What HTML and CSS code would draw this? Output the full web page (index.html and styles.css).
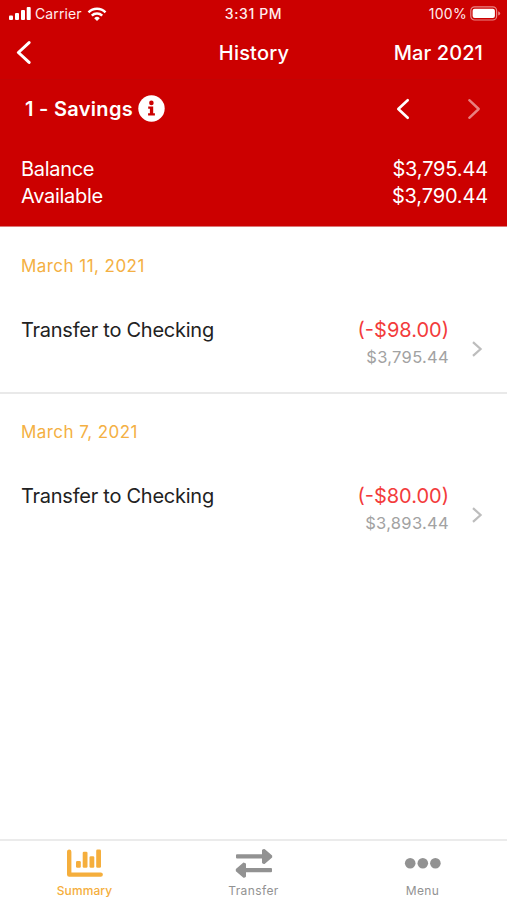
FILE: index.html
```html
<!DOCTYPE html>
<html lang="en">
<head>
<meta charset="utf-8">
<title>History</title>
<link rel="stylesheet" href="styles.css">
</head>
<body>
<div class="app">
  <header class="header">
    <div class="status">
      <div class="status-left">
        <svg class="signal" width="22" height="14" viewBox="0 0 22 14" fill="#fff"><rect x="0" y="8.5" width="4" height="4.5" rx="1"/><rect x="6" y="6" width="4" height="7" rx="1"/><rect x="12" y="3" width="4" height="10" rx="1"/><rect x="17.7" y="0" width="4" height="13" rx="1"/></svg>
        <span class="carrier">Carrier</span>
        <svg class="wifi" width="20" height="14" viewBox="0 0 20 14" fill="none" stroke="#fff" stroke-width="2.5"><path d="M1.5 5.4a12 12 0 0 1 17 0"/><path d="M4.8 8.7a7.4 7.4 0 0 1 10.4 0"/><path d="M10 14 7.2 11.2a4 4 0 0 1 5.6 0z" fill="#fff" stroke="none"/></svg>
      </div>
      <span class="clock">3:31 PM</span>
      <div class="status-right">
        <span class="percent">100%</span>
        <svg width="31" height="15" viewBox="0 0 31 15"><rect x=".8" y=".8" width="25.8" height="13.2" rx="3.8" fill="none" stroke="#e98585" stroke-width="1.2"/><rect x="2.6" y="2.7" width="22.3" height="9.4" rx="2" fill="#fff"/><path d="M28.2 5.2q2 .8 2 2.2t-2 2.2z" fill="#e98585"/></svg>
      </div>
    </div>
    <nav class="navbar">
      <svg class="back" width="16" height="24" viewBox="0 0 16 24" fill="none" stroke="#fff" stroke-width="3" stroke-linecap="round" stroke-linejoin="round"><path d="M14.1 1.6 3.4 11.5l10.7 9.9"/></svg>
      <h1 class="title">History</h1>
      <span class="month">Mar 2021</span>
    </nav>
    <div class="account">
      <span class="account-name">1 - Savings</span>
      <svg class="info" width="27" height="27" viewBox="0 0 27 27"><circle cx="13.5" cy="13.5" r="13.2" fill="#fff"/><circle cx="13.4" cy="7.9" r="2.3" fill="#c00"/><path d="M10.2 11.5h5v6.7h1.7v2.3h-6.8v-2.3h1.8v-4.4h-1.7z" fill="#c00"/></svg>
      <svg class="prev" width="14" height="22" viewBox="0 0 14 22" fill="none" stroke="#fff" stroke-width="2.6" stroke-linecap="round" stroke-linejoin="round"><path d="M11.7 2.2 2.3 11l9.4 8.8"/></svg>
      <svg class="next" width="14" height="22" viewBox="0 0 14 22" fill="none" stroke="#e98080" stroke-width="2.4" stroke-linecap="round" stroke-linejoin="round"><path d="m2.3 2.2 9.4 8.8-9.4 8.8"/></svg>
    </div>
    <div class="totals">
      <div class="total"><span class="label">Balance</span><span class="value">$3,795.44</span></div>
      <div class="total"><span class="label">Available</span><span class="value">$3,790.44</span></div>
    </div>
  </header>
  <main class="list">
    <section class="entry">
      <h2 class="date">March 11, 2021</h2>
      <div class="row">
        <span class="desc">Transfer to Checking</span>
        <div class="amounts"><span class="amount">(-$98.00)</span><span class="running">$3,795.44</span></div>
        <svg class="chevron" width="12" height="18" viewBox="0 0 12 18" fill="none" stroke="#bdbdbd" stroke-width="2.2"><path d="m2 2.1 7.6 6.9L2 15.9"/></svg>
      </div>
    </section>
    <section class="entry">
      <h2 class="date">March 7, 2021</h2>
      <div class="row">
        <span class="desc">Transfer to Checking</span>
        <div class="amounts"><span class="amount">(-$80.00)</span><span class="running">$3,893.44</span></div>
        <svg class="chevron" width="12" height="18" viewBox="0 0 12 18" fill="none" stroke="#bdbdbd" stroke-width="2.2"><path d="m2 2.1 7.6 6.9L2 15.9"/></svg>
      </div>
    </section>
  </main>
  <footer class="tabs">
    <div class="tab active">
      <svg width="38" height="30" viewBox="0 0 38 30" fill="currentColor"><path d="M3.200 3.800v22.800h31.500" fill="none" stroke="currentColor" stroke-width="4.400" stroke-linecap="round" stroke-linejoin="round"/><rect x="10" y="13" width="4.800" height="6.800" rx="1.300"/><rect x="16.700" y="3.800" width="4.800" height="16" rx="1.300"/><rect x="23.500" y="8.300" width="4.800" height="11.500" rx="1.300"/><rect x="30.200" y="1.600" width="4.800" height="18.200" rx="1.300"/></svg>
      <span class="tab-summary">Summary</span>
    </div>
    <div class="tab">
      <svg width="38" height="30" viewBox="0 0 38 30" fill="currentColor" stroke="currentColor" stroke-width="2" stroke-linejoin="round"><path d="M2 7.2h26V2.4l1.200-.5 7 6v1.200l-7 6-1.200-.5V9.600H2z"/><path d="M36 20.900H10v-4.800l-1.200-.5-7 6v1.200l7 6L10 28.300v-5H36z"/></svg>
      <span class="tab-transfer">Transfer</span>
    </div>
    <div class="tab">
      <svg width="38" height="30" viewBox="0 0 38 30" fill="currentColor"><circle cx="6.200" cy="15.300" r="5.300"/><circle cx="18.800" cy="15.300" r="5.300"/><circle cx="31.400" cy="15.300" r="5.300"/></svg>
      <span class="tab-menu">Menu</span>
    </div>
  </footer>
</div>
</body>
</html>
```
FILE: styles.css
```css
* { box-sizing: border-box; }
body { margin: 0; background: #fff; font-family: Inter, "Liberation Sans", sans-serif; }
svg { display: block; flex: none; }
.app { width: 507px; height: 900px; display: flex; flex-direction: column; overflow: hidden; white-space: nowrap; }
.header { height: 227px; background: #c00; color: #fff; border-bottom: 1px solid #d77; }
.status { height: 27px; display: grid; grid-template-columns: 1fr auto 1fr; align-items: center; padding: 0 6px 0 9px; font-size: 14px; color: #ffeded; }
.status-left, .status-right { display: flex; align-items: center; }
.status-right { justify-content: flex-end; gap: 3px; }
.carrier { margin-left: 4px; letter-spacing: .1px; }
.wifi { margin-left: 5px; }
.clock { font-weight: 500; font-size: 14px; letter-spacing: .6px; margin-left: -3px; }
.percent { font-size: 14px; letter-spacing: .3px; }
.navbar { height: 53px; display: grid; grid-template-columns: 1fr auto 1fr; align-items: center; padding: 0 24px 1px 15px; border-bottom: 1px solid #c30404; }
.title { margin: 0; font-size: 20px; font-weight: 500; letter-spacing: .2px; padding-left: 10px; }
.month { font-size: 20px; font-weight: 500; letter-spacing: .1px; text-align: right; }
.account { height: 57px; display: flex; align-items: center; padding: 0 26px 0 25px; }
.account-name { font-size: 20px; font-weight: 600; letter-spacing: .3px; }
.info { margin-left: 5px; }
.prev { margin-left: auto; }
.next { margin-left: 57px; }
.totals { padding: 19px 19px 0 21px; }
.total { height: 27px; line-height: 27px; display: flex; justify-content: space-between; font-size: 20px; letter-spacing: -.3px; }
.value { letter-spacing: -.15px; }
.list { flex: 1; }
.entry { height: 165px; padding: 26px 25px 0 21px; }
.entry + .entry { border-top: 2px solid #e9e9e9; padding-top: 25px; }
.date { margin: 0; font-size: 17px; font-weight: 400; line-height: 26px; letter-spacing: .45px; color: #f4b043; }
.row { display: flex; margin-top: 38px; height: 54px; }
.desc { font-size: 20px; line-height: 26px; letter-spacing: -.25px; color: #222; }
.amounts { margin-left: auto; display: flex; flex-direction: column; align-items: flex-end; }
.amount { font-size: 20px; line-height: 26px; color: #f33b3b; }
.running { font-size: 16.500px; line-height: 28px; letter-spacing: .3px; color: #a2a2a2; }
.chevron { margin: 23px -1px 0 22px; }
.tabs { height: 61px; border-top: 2px solid #ebebeb; display: grid; grid-template-columns: repeat(3, 1fr); }
.tab { display: flex; flex-direction: column; align-items: center; padding-top: 7px; color: #929292; font-size: 12px; line-height: 16px; letter-spacing: .4px; }
.tab span { margin-top: 5px; }
.active { color: #f5ae3c; }
.tab-summary { font-weight: 500; letter-spacing: .1px; }
```
